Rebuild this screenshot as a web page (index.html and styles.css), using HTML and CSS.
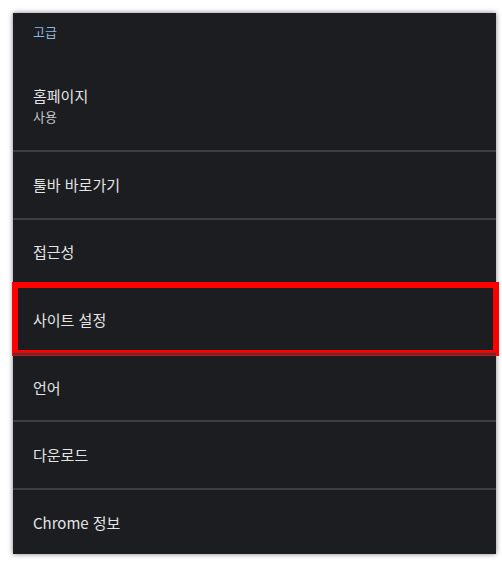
FILE: index.html
```html
<!DOCTYPE html>
<html lang="ko">
<head>
    <meta charset="UTF-8">
    <meta name="viewport" content="width=device-width, initial-scale=1.0">
    <title>고급 설정</title>
    <link rel="stylesheet" href="styles.css">
</head>
<body>
    <div class="panel">
        <div class="section-title">고급</div>
        <div class="item item-double">
            <div class="item-title">홈페이지</div>
            <div class="item-sub">사용</div>
        </div>
        <div class="item">
            <div class="item-title">툴바 바로가기</div>
        </div>
        <div class="item">
            <div class="item-title">접근성</div>
        </div>
        <div class="item item-marked">
            <div class="item-title">사이트 설정</div>
        </div>
        <div class="item">
            <div class="item-title">언어</div>
        </div>
        <div class="item">
            <div class="item-title">다운로드</div>
        </div>
        <div class="item">
            <div class="item-title">Chrome 정보</div>
        </div>
    </div>
</body>
</html>
```

FILE: styles.css
```css
* {
    margin: 0;
    padding: 0;
    box-sizing: border-box;
}

body {
    background: #ffffff;
    font-family: 'Noto Sans CJK KR', 'Noto Sans', sans-serif;
    padding: 13px 6px 15px 13px;
}

.panel {
    width: 483px;
    height: 541px;
    background: #1b1d20;
    box-shadow: 0 0 5px rgba(0, 0, 0, 0.5);
}

.section-title {
    height: 44px;
    padding: 9px 0 0 20px;
    font-size: 13px;
    line-height: 20px;
    color: #8ab8dc;
}

.item {
    position: relative;
    height: 67.6px;
    padding-left: 20px;
    border-top: 2px solid #3a3d41;
    display: flex;
    flex-direction: column;
    justify-content: center;
}

.item-double {
    height: 93px;
    border-top: none;
    justify-content: flex-start;
    padding-top: 28px;
}

.item-title {
    font-size: 15px;
    line-height: 22px;
    color: #e4e4e4;
}

.item-sub {
    font-size: 13px;
    line-height: 20px;
    color: #c6c8ca;
}

.item-marked::after {
    content: "";
    position: absolute;
    top: -5px;
    left: -1px;
    right: -3px;
    bottom: -3px;
    border: 6px solid #ff0000;
}
```
